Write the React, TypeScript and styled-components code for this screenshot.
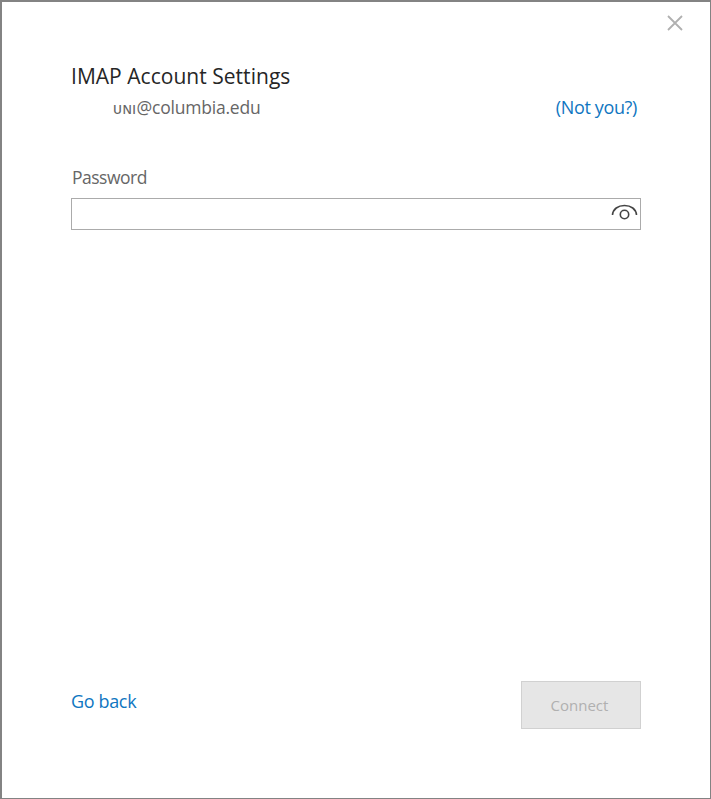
import React from "react";
import styled, { createGlobalStyle } from "styled-components";

const GlobalStyle = createGlobalStyle`
  * { box-sizing: border-box; }
  body { margin: 0; background: #fff; font-family: "Open Sans", "Noto Sans", sans-serif; }
`;

const Dialog = styled.main`
  display: flex;
  flex-direction: column;
  width: 711px;
  height: 799px;
  border: solid #838383;
  border-width: 2px 1px 1px 2px;
  background: #fff;
`;

const TitleBar = styled.header`
  display: flex;
  justify-content: flex-end;
  height: 58px;
  padding: 12px 26px 0 0;
`;

const CloseButton = styled.button`
  display: flex;
  width: 18px;
  height: 18px;
  padding: 0;
  border: 0;
  background: none;
`;

const Content = styled.section`
  flex: 1;
  padding: 0 69px;
`;

const Heading = styled.h1`
  margin: 0;
  color: #262626;
  font-size: 21px;
  font-weight: 400;
  letter-spacing: 0.03px;
  line-height: 32px;
  white-space: nowrap;
`;

const AccountRow = styled.div`
  display: flex;
  justify-content: space-between;
  padding: 0 4px 0 42px;
  line-height: 30px;
`;

const AccountName = styled.span`
  color: #666;
  font-size: 17.5px;
  letter-spacing: -0.21px;
  white-space: nowrap;
`;

const Uni = styled.span`
  font-size: 12px;
  font-weight: 600;
  letter-spacing: 0.5px;
`;

const TextLink = styled.a`
  color: #0f76c1;
  font-size: 18px;
  letter-spacing: -0.35px;
  white-space: nowrap;
`;

const Label = styled.label`
  display: block;
  margin: 37px 0 6px 1px;
  color: #666;
  font-size: 17.5px;
  letter-spacing: -0.5px;
  line-height: 30px;
`;

const PasswordField = styled.div`
  display: flex;
  width: 570px;
  height: 32px;
  border: 1px solid #ababab;
`;

const PasswordInput = styled.input`
  flex: 1;
  min-width: 0;
  border: 0;
  outline: 0;
  background: transparent;
`;

const RevealButton = styled.button`
  display: flex;
  width: 32px;
  padding: 0;
  border: 0;
  background: none;
`;

const Actions = styled.footer`
  display: flex;
  justify-content: space-between;
  height: 117px;
  padding: 0 69px;
`;

const BackLink = styled(TextLink)`
  height: 40px;
  line-height: 40px;
`;

const ConnectButton = styled.button`
  width: 120px;
  height: 48px;
  padding: 0 3px 0 0;
  border: 1px solid #d1d1d1;
  background: #e6e6e6;
  color: #b0b0b0;
  font: 15px "Open Sans", "Noto Sans", sans-serif;
`;

export default function App() {
  return (
    <>
      <GlobalStyle />
      <Dialog>
        <TitleBar>
          <CloseButton aria-label="Close">
            <svg width="18" height="18" viewBox="0 0 18 18" fill="none" stroke="#b0b0b0" strokeWidth="1.8">
              <path d="M2 2 16 16M16 2 2 16" />
            </svg>
          </CloseButton>
        </TitleBar>
        <Content>
          <Heading>IMAP Account Settings</Heading>
          <AccountRow>
            <AccountName><Uni>UNI</Uni>@columbia.edu</AccountName>
            <TextLink>(Not you?)</TextLink>
          </AccountRow>
          <Label htmlFor="password">Password</Label>
          <PasswordField>
            <PasswordInput id="password" type="password" />
            <RevealButton aria-label="Show password">
              <svg width="32" height="30" viewBox="0 0 32 30" fill="none" stroke="#444" strokeWidth="1.6">
                <path d="M4.500 16C5 10 10 6.500 16.500 6.500S28 10 28.500 16" />
                <circle cx="16.500" cy="15.500" r="4.200" />
              </svg>
            </RevealButton>
          </PasswordField>
        </Content>
        <Actions>
          <BackLink>Go back</BackLink>
          <ConnectButton disabled>Connect</ConnectButton>
        </Actions>
      </Dialog>
    </>
  );
}
